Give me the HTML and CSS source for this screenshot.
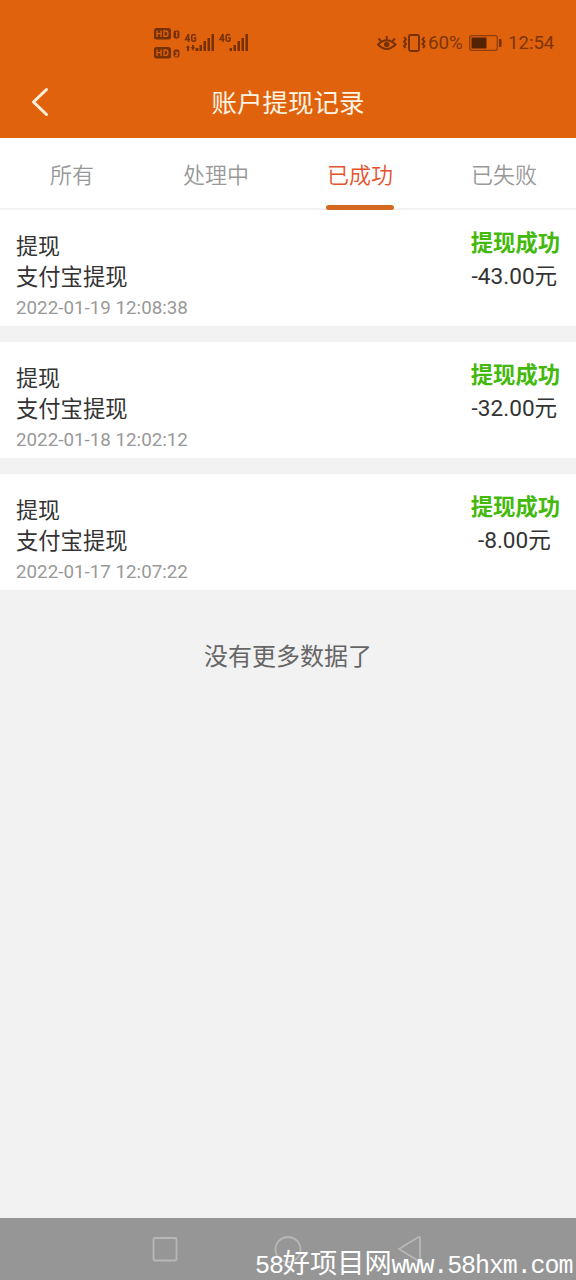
FILE: index.html
```html
<!DOCTYPE html>
<html lang="zh-CN">
<head>
<meta charset="utf-8">
<title>账户提现记录</title>
<link rel="stylesheet" href="styles.css">
</head>
<body>
<div class="screen">
  <header class="header">
    <div class="status">
      <svg class="status-left" width="96" height="34" viewBox="0 0 96 34">
        <g class="ink">
          <rect x="0" y="2" width="17" height="11.500" rx="2.500"/>
          <rect x="0" y="21" width="17" height="11.500" rx="2.500"/>
          <rect x="19.500" y="4.500" width="6" height="8" rx="2"/>
          <rect x="19.500" y="23.500" width="6" height="8" rx="2"/>
          <path d="M32 22l2-3 2 3h-1v3h-2v-3zM36 21h2v-2h2v2h1l-2 4-2-4zM41.500 22h3v3h-3zM45.500 19h2.500v6h-2.500zM49.500 15h2.500v10h-2.500zM53.500 12h2.500v13h-2.500zM57.500 8h2.500v17h-2.500z"/>
          <path d="M75.500 22h2.500v3h-2.500zM79.500 19h2.500v6h-2.500zM83.500 15h2.500v10h-2.500zM87.500 12h2.500v13h-2.500zM91.500 8h2.500v17h-2.500z"/>
        </g>
        <path class="cut" d="M3 4.500v6.500M7 4.500v6.500M3 7.700h4M10 5h1.500q2.500 0 2.500 2.700t-2.500 2.700h-1.500zM3 23.500v6.500M7 23.500v6.500M3 26.700h4M10 24h1.500q2.500 0 2.500 2.700t-2.500 2.700h-1.500zM21.800 7l1-.6v4.500M21.300 26.300h2.200v1.500l-2 2h2.500"/>
        <path class="net" d="M34.500 16V8l-3 5.500h4.500M41.500 9.500q-.5-1-1.800-1-2 0-2 2v2.700q0 2 2 2 1.300 0 1.800-.7v-2.500h-1.800M69 16V8l-3 5.500h4.500M76 9.500q-.5-1-1.800-1-2 0-2 2v2.700q0 2 2 2 1.300 0 1.800-.7v-2.500h-1.800"/>
      </svg>
      <div class="status-right">
        <svg width="50" height="20" viewBox="0 0 50 20">
          <g class="line">
            <path d="M2 11.500Q10.500 3 19.500 11.500Q10.500 20.500 2 11.500zM2.500 5.500l2.500 2.500M10.700 3v3.500M19 5.500l-2.500 2.500"/>
            <rect x="33" y="2" width="10" height="16" rx="1.500"/>
            <path d="M28 4l2 2.500-2 2 2 2.500-2 2 1.500 2M48.500 4l-2 2.500 2 2-2 2.500 2 2-1.500 2"/>
          </g>
          <circle class="ink" cx="10.700" cy="11.500" r="2.700"/>
        </svg>
        <span class="percent">60%</span>
        <svg class="battery" width="33" height="16" viewBox="0 0 33 16">
          <rect class="frame" x=".7" y=".7" width="27.600" height="14.600" rx="2"/>
          <rect class="charge" x="2.500" y="2.500" width="15" height="11"/>
          <rect class="ink" x="30" y="4" width="2.500" height="8" rx="1"/>
        </svg>
        <span class="clock">12:54</span>
      </div>
    </div>
    <div class="titlebar">
      <svg class="back" width="20" height="30" viewBox="0 0 20 30"><path d="M17.500 2.500L4.500 15l13 12.500"/></svg>
      <h1 class="title">账户提现记录</h1>
    </div>
  </header>
  <nav class="tabs">
    <div class="tab">所有</div>
    <div class="tab">处理中</div>
    <div class="tab active">已成功</div>
    <div class="tab">已失败</div>
  </nav>
  <main class="list">
    <section class="record">
      <div class="info"><div class="kind">提现</div><div class="method">支付宝提现</div><div class="time">2022-01-19 12:08:38</div></div>
      <div class="result"><div class="state">提现成功</div><div class="amount">-43.00元</div></div>
    </section>
    <section class="record">
      <div class="info"><div class="kind">提现</div><div class="method">支付宝提现</div><div class="time">2022-01-18 12:02:12</div></div>
      <div class="result"><div class="state">提现成功</div><div class="amount">-32.00元</div></div>
    </section>
    <section class="record">
      <div class="info"><div class="kind">提现</div><div class="method">支付宝提现</div><div class="time">2022-01-17 12:07:22</div></div>
      <div class="result"><div class="state">提现成功</div><div class="amount">-8.00元</div></div>
    </section>
  </main>
  <p class="end">没有更多数据了</p>
  <footer class="navbar">
    <svg class="keys" width="576" height="62" viewBox="0 0 576 62">
      <rect x="153.500" y="20" width="23" height="22.500" rx="1.500"/>
      <circle cx="288" cy="31.500" r="12.500"/>
      <path d="M399 31l19.500-12q1.500-.5 1.500 1v22.500q0 1.500-1.500.5z"/>
    </svg>
    <div class="watermark"><span class="half">58</span>好项目网<span class="half">www.58hxm.com</span></div>
  </footer>
</div>
</body>
</html>
```
FILE: styles.css
```css
* { box-sizing: border-box; }
body { margin: 0; font-family: Roboto, "Noto Sans CJK SC", sans-serif; color: #333; }
.screen { width: 576px; height: 1280px; display: flex; flex-direction: column; background: #f2f2f2; overflow: hidden; }
svg { display: block; flex: none; fill: none; }

.header { height: 138px; flex: none; background: #e0620d; }
.status { height: 66px; padding: 26px 22px 0 154px; display: flex; justify-content: space-between; align-items: flex-start; color: #7d3508; }
.ink { fill: #763107; }
.cut { stroke: #e0620d; stroke-width: 1.3; }
.net { stroke: #763107; stroke-width: 1.5; }
.line { stroke: #763107; stroke-width: 1.9; }
.frame { stroke: #8d3d08; stroke-width: 1.3; }
.charge { fill: #542304; }
.status-right { height: 34px; display: flex; align-items: center; font-size: 19px; }
.percent { width: 37px; margin-left: 2px; font-size: 18.8px; }
.battery { margin-left: 4px; }
.clock { width: 46px; margin-left: 6px; font-size: 18.6px; white-space: nowrap; }
.titlebar { height: 72px; padding-left: 29px; display: grid; grid-template-columns: 20px 1fr 49px; align-items: center; }
.back { stroke: #fff0dc; stroke-width: 3; stroke-linecap: round; stroke-linejoin: round; }
.title { margin: 0; padding-top: 2px; color: #fff3e2; font-size: 25.5px; font-weight: 400; line-height: 36px; text-align: center; }

.tabs { height: 72px; flex: none; display: grid; grid-template-columns: repeat(4, 1fr); justify-items: center; background: #fff; border-bottom: 2px solid #f3f3f3; }
.tab { height: 72px; padding-top: 22px; font-size: 22px; line-height: 32px; color: #999; font-weight: 350; }
.active { color: #e4532d; }
.active::after { content: ""; display: block; width: 68px; height: 5px; margin: 13px -1px 0; border-radius: 3px; background: #d46820; }

.list { display: flex; flex-direction: column; gap: 16px; }
.record { height: 116px; padding: 17px 16px 0; display: flex; justify-content: space-between; background: #fff; }
.kind { padding-top: 5px; font-size: 22px; line-height: 30px; }
.method { font-size: 22.3px; line-height: 31px; }
.time { font-size: 18.8px; line-height: 31px; color: #999; }
.result { text-align: center; }
.state { font-size: 22.3px; line-height: 33px; font-weight: 700; color: #43b90b; }
.amount { padding-right: 2px; font-size: 22.6px; line-height: 34px; }
.end { margin: 50px 0 0; font-size: 24px; line-height: 34px; text-align: center; color: #666; }

.navbar { position: relative; height: 62px; margin-top: auto; flex: none; background: #969696; }
.keys { stroke: #b7b7b7; stroke-width: 1.8; }
.watermark { position: absolute; left: 255px; top: 25px; color: #fff; font-family: "Noto Sans CJK SC", sans-serif; font-size: 27.2px; line-height: 37px; white-space: nowrap; }
.half { font-family: "Liberation Mono", monospace; font-size: 25px; line-height: 1; letter-spacing: -1.1px; }
```
